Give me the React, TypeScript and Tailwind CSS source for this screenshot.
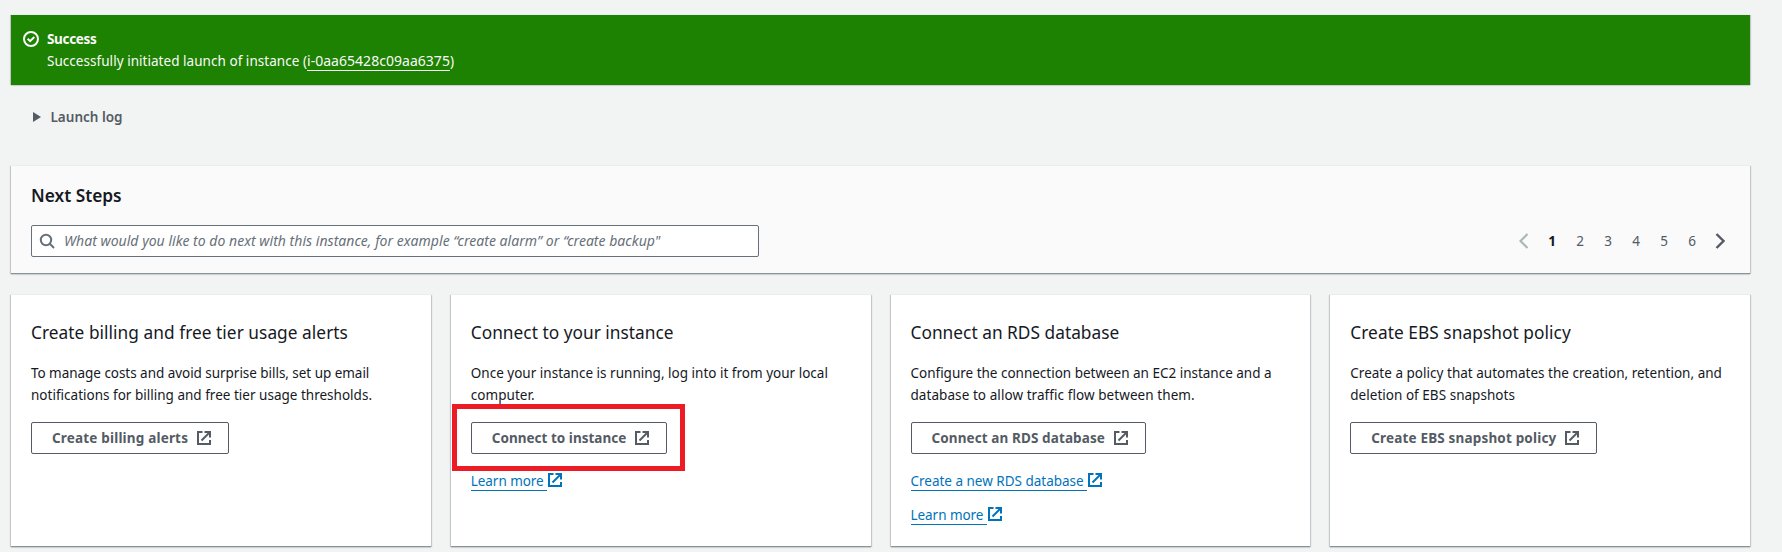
import type { ReactNode } from "react";

type CardData = {
  title: string;
  titleClass: string;
  lines: { text: string; cls: string }[];
  action: string;
  actionClass: string;
  buttonWidth: string;
  highlighted?: boolean;
  links: { text: string; cls: string }[];
};

const cards: CardData[] = [
  {
    title: "Create billing and free tier usage alerts",
    titleClass: "tracking-[0.04px]",
    lines: [
      { text: "To manage costs and avoid surprise bills, set up email", cls: "tracking-[-0.04px]" },
      { text: "notifications for billing and free tier usage thresholds.", cls: "tracking-[0.01px]" },
    ],
    action: "Create billing alerts",
    actionClass: "tracking-[0.18px]",
    buttonWidth: "w-[198px]",
    links: [],
  },
  {
    title: "Connect to your instance",
    titleClass: "tracking-[0.02px]",
    lines: [
      { text: "Once your instance is running, log into it from your local", cls: "tracking-[0.01px]" },
      { text: "computer.", cls: "tracking-[0.05px]" },
    ],
    action: "Connect to instance",
    actionClass: "tracking-[0.02px]",
    buttonWidth: "w-[196px]",
    highlighted: true,
    links: [{ text: "Learn more", cls: "tracking-[-0.05px]" }],
  },
  {
    title: "Connect an RDS database",
    titleClass: "tracking-[0.02px]",
    lines: [
      { text: "Configure the connection between an EC2 instance and a", cls: "tracking-[-0.01px]" },
      { text: "database to allow traffic flow between them.", cls: "tracking-[0.07px]" },
    ],
    action: "Connect an RDS database",
    actionClass: "tracking-[0.1px]",
    buttonWidth: "w-[235px]",
    links: [
      { text: "Create a new RDS database", cls: "tracking-[-0.01px]" },
      { text: "Learn more", cls: "tracking-[-0.05px]" },
    ],
  },
  {
    title: "Create EBS snapshot policy",
    titleClass: "tracking-[0.06px]",
    lines: [
      { text: "Create a policy that automates the creation, retention, and", cls: "tracking-[0.02px]" },
      { text: "deletion of EBS snapshots", cls: "tracking-[0.03px]" },
    ],
    action: "Create EBS snapshot policy",
    actionClass: "tracking-[0.17px]",
    buttonWidth: "w-[247px]",
    links: [],
  },
];

function ExternalIcon() {
  return (
    <svg viewBox="0 0 16 16" className="size-4 shrink-0" fill="none" stroke="currentColor" strokeWidth="2">
      <path d="M6.5 2H2v12h12v-4" />
      <path d="M8.5 2H14v5.5" />
      <path d="M5.5 10.5L13.5 2.5" />
    </svg>
  );
}

function Panel({ className, children }: { className: string; children: ReactNode }) {
  return (
    <div className={`shadow-[0_-1px_0_0_#eaeded,0_1px_1px_0_rgba(0,28,36,0.1),1px_0_1px_0_rgba(0,28,36,0.18),-1px_0_1px_0_rgba(0,28,36,0.18)] ${className}`}>
      {children}
    </div>
  );
}

function Card({ card }: { card: CardData }) {
  return (
    <Panel className="flex h-[252px] flex-col items-start border-b border-[#879596] bg-white px-5 pt-[26px]">
      <h2 className={`text-[17.3px] leading-6 whitespace-nowrap ${card.titleClass}`}>{card.title}</h2>
      <div className="mt-[17px] whitespace-nowrap">
        {card.lines.map((l) => (
          <p key={l.text} className={`leading-[22px] ${l.cls}`}>{l.text}</p>
        ))}
      </div>
      <div className="relative mt-4">
        <button
          className={`flex h-8 items-center justify-between rounded-[2px] border border-[#545b64] pr-4 pl-5 font-bold whitespace-nowrap text-[#545b64] ${card.buttonWidth}`}
        >
          <span className={card.actionClass}>{card.action}</span>
          <ExternalIcon />
        </button>
        {card.highlighted && (
          <div className="pointer-events-none absolute -top-[18px] -left-[19px] h-[67px] w-[233px] border-[5px] border-[#ed1c24]" />
        )}
      </div>
      <div className="mt-[15px] flex flex-col items-start gap-3">
        {card.links.map((l) => (
          <a key={l.text} className="flex h-[22px] items-center text-[#0073bb]">
            <span className={`h-[21px] border-b border-[#0073bb] pr-[3.5px] leading-[23px] whitespace-nowrap ${l.cls}`}>{l.text}</span>
            <ExternalIcon />
          </a>
        ))}
      </div>
    </Panel>
  );
}

export default function App() {
  return (
    <div className="h-[552px] w-[1782px] overflow-hidden bg-[#f2f3f3] pt-[15px] pl-[11px] font-['Noto_Sans',sans-serif] text-[13.5px] leading-[22px] text-[#16191f]">
      <div className="w-[1739px]">
        <Panel className="flex h-[70px] bg-[#1d8102] pt-[13px] pl-3 text-[#fafafa]">
          <svg viewBox="0 0 16 16" className="mt-[3px] size-4" fill="none" stroke="currentColor" strokeWidth="2">
            <circle cx="8" cy="8" r="7" />
            <path d="M4.7 7.8l2.4 2.4 4.2-4.2" />
          </svg>
          <div className="ml-2 whitespace-nowrap">
            <p className="font-bold tracking-[-0.33px]">Success</p>
            <p className="tracking-[0.04px]">
              Successfully initiated launch of instance (
              <a className="inline-block h-[21px] border-b border-[#fafafa] text-sm leading-[22px] tracking-[0.03px]">i-0aa65428c09aa6375</a>)
            </p>
          </div>
        </Panel>

        <div className="mt-[21px] flex h-[22px] items-center pl-[22px] text-[#545b64]">
          <svg viewBox="0 0 8 10" className="h-[10px] w-2" fill="currentColor">
            <path d="M0 0l8 5-8 5z" />
          </svg>
          <span className="ml-[9.5px] font-semibold">Launch log</span>
        </div>

        <Panel className="mt-[38px] h-[108px] border-b border-[#879596] bg-[#fafafa] px-5 pt-[18px]">
          <h1 className="text-[17.3px] leading-6 font-semibold">Next Steps</h1>
          <div className="mt-[17px] flex justify-between">
            <div className="flex h-8 w-[728px] items-center rounded-[2px] border border-[#687078] bg-white pl-[7px] text-[#687078]">
              <svg viewBox="0 0 16 16" className="size-4" fill="none" stroke="currentColor" strokeWidth="2">
                <circle cx="7" cy="7" r="5.2" />
                <path d="M10.8 10.8L15 15" />
              </svg>
              <span className="ml-[9px] text-sm tracking-[0.03px] whitespace-nowrap italic">
                What would you like to do next with this instance, for example “create alarm” or “create backup"
              </span>
            </div>
            <div className="mr-[5px] flex items-center text-[#545b64]">
              <svg viewBox="0 0 10 16" className="mr-[9.5px] h-4 w-[10px] text-[#aab7b8]" fill="none" stroke="currentColor" strokeWidth="2.2">
                <path d="M8.5 1L1.5 8l7 7" />
              </svg>
              <span className="w-7 text-center font-bold text-[#16191f]">1</span>
              {[2, 3, 4, 5, 6].map((n) => (
                <span key={n} className="w-7 text-center">{n}</span>
              ))}
              <svg viewBox="0 0 10 16" className="ml-[9px] h-4 w-[10px]" fill="none" stroke="currentColor" strokeWidth="2.4">
                <path d="M1.5 1l7 7-7 7" />
              </svg>
            </div>
          </div>
        </Panel>

        <div className="mt-[21px] grid grid-cols-4 gap-5">
          {cards.map((c) => (
            <Card key={c.title} card={c} />
          ))}
        </div>
      </div>
    </div>
  );
}
